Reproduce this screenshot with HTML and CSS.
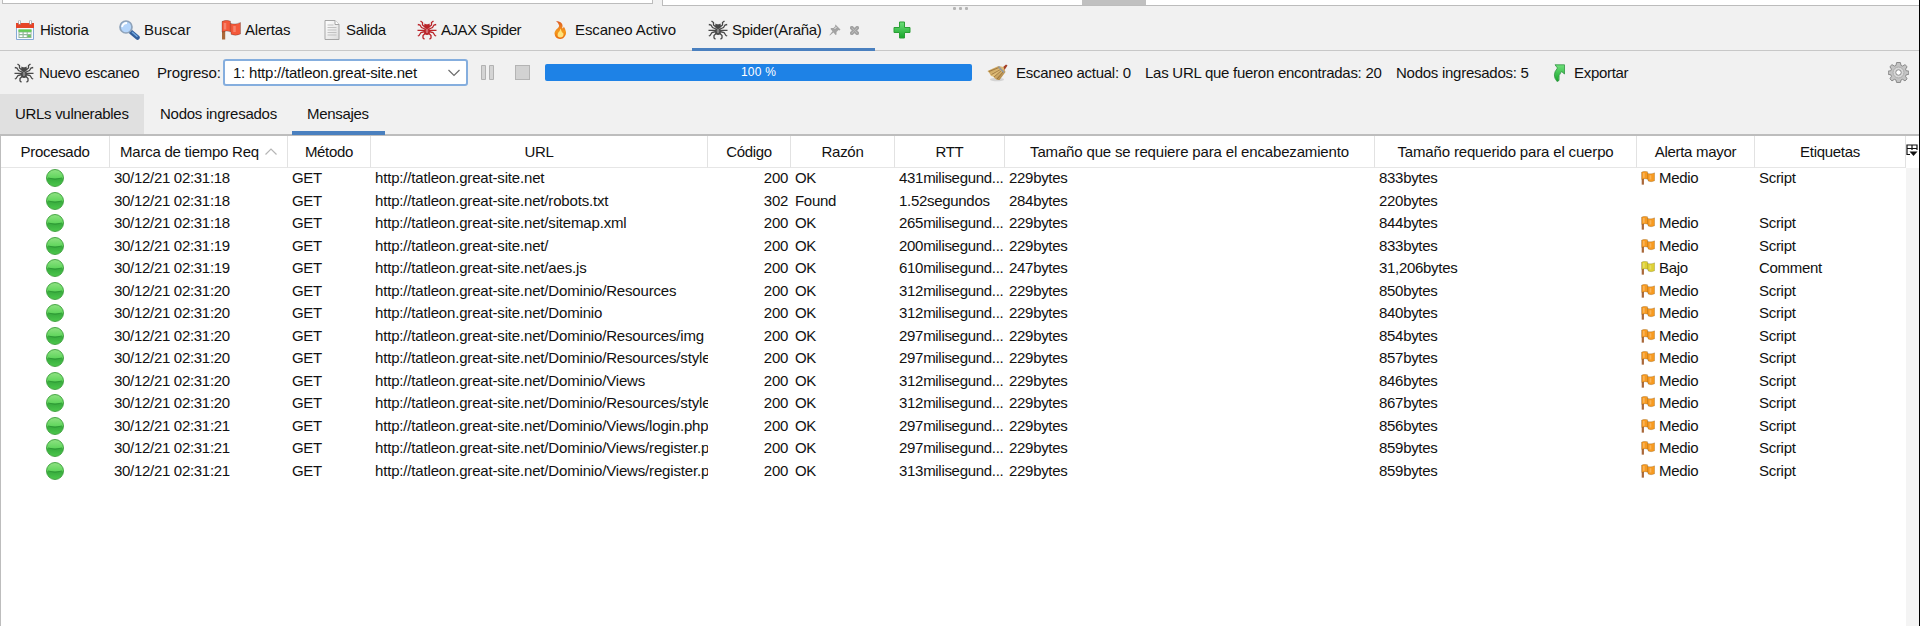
FILE: index.html
```html
<!DOCTYPE html>
<html lang="es">
<head>
<meta charset="utf-8">
<title>Spider(Araña)</title>
<link rel="stylesheet" href="styles.css">
</head>
<body>
<svg class="defs" width="0" height="0">
  <defs>
    <linearGradient id="ball" x1="0" y1="0" x2="0" y2="1"><stop offset="0" stop-color="#8fe283"/><stop offset=".48" stop-color="#62d65e"/><stop offset=".56" stop-color="#38ad3e"/><stop offset="1" stop-color="#4cc84c"/></linearGradient>
    <linearGradient id="red" x1="0" y1="0" x2="1" y2="1"><stop offset="0" stop-color="#ff9a78"/><stop offset=".5" stop-color="#f4593a"/><stop offset="1" stop-color="#d93a20"/></linearGradient>
    <linearGradient id="fire" x1="0" y1="0" x2="0" y2="1"><stop offset="0" stop-color="#dd5a22"/><stop offset=".6" stop-color="#f59a1c"/><stop offset="1" stop-color="#e8660c"/></linearGradient>
    <linearGradient id="grn" x1="0" y1="0" x2="0" y2="1"><stop offset="0" stop-color="#6ee07a"/><stop offset="1" stop-color="#17a52a"/></linearGradient>
    <linearGradient id="doc" x1="0" y1="0" x2="1" y2="1"><stop offset="0" stop-color="#fff"/><stop offset="1" stop-color="#dcdcdc"/></linearGradient>
    <linearGradient id="wood" x1="0" y1="0" x2="1" y2="1"><stop offset="0" stop-color="#b98d45"/><stop offset=".5" stop-color="#dfbd78"/><stop offset="1" stop-color="#96682a"/></linearGradient>
    <symbol id="spider" viewBox="0 0 20 20">
      <g fill="none" stroke="currentColor" stroke-width="1.300">
        <path d="M8.500 7.500 5.500 5V2.500L3.500 1M11.500 7.500l3-2.500V2.500L16.500 1M8 9 4.500 7.500 3 5 .8 4.500M12 9l3.500-1.500L17 5l2.200-.5M8 11.500 4 12.500 2 15.500.8 16M12 11.500l4 1 2 3 1.200.5M8.500 13 6 15.500v2.500L7.500 19.300M11.500 13l2.500 2.500v2.500l-1.500 1.300M8 10.300H.5M12 10.300H19.500"/>
      </g>
      <ellipse cx="10" cy="11.500" rx="2.900" ry="3.500" fill="currentColor"/><path d="M7.500 3.500 9 4.300h2l1.500-.8.5 3-1.500 2h-3L7 6.500z" fill="currentColor"/><ellipse cx="10" cy="11" rx="1.300" ry="2.200" fill="#fff" opacity=".35"/>
    </symbol>
    <symbol id="flag" viewBox="0 0 20 20">
      <path d="M1 1.500h3.200V19.500H1z" fill="#a9683a"/><path d="M1 1.500Q5-.8 9.500 1.200V3.500q5.500 1.500 10-1V14q-5 2.500-9.500.3V12Q6 10 1 12z" fill="currentColor" stroke="#0004" stroke-width=".8"/><path d="M4 3v6.500M13.500 6v6" stroke="#fff" stroke-width="2.500" opacity=".25"/><path d="M9.500 3v9" stroke="#000" stroke-width="1.500" opacity=".15"/>
    </symbol>
    <symbol id="led" viewBox="0 0 18 18"><circle cx="9" cy="9" r="8.500" fill="url(#ball)" stroke="#3d9e3c" stroke-width=".9"/><path d="M2 9q7 2.500 14 0" fill="none" stroke="#2b9633" stroke-width=".9"/></symbol>
  </defs>
</svg>
<div class="app">
  <div class="panes">
    <div class="pane pane-left"></div>
    <div class="pane pane-right"><div class="scroll-thumb"></div></div>
    <div class="grip"><i></i><i></i><i></i></div>
  </div>
  <nav class="tabs">
    <div class="tab t-hist"><svg class="ic" viewBox="0 0 20 20"><path d="M1.500 4h17v15.500h-17z" fill="#f7faff" stroke="#86a9d6"/><path d="M1 3h18v5H1z" fill="#e64427"/><path d="M4.500 .5v4M15.500 .5v4" stroke="#9aa5ae" stroke-width="2.500"/><path d="M4.500 1v3M15.500 1v3" stroke="#fff" stroke-width="1"/><path d="M3.500 9.500h13V18h-13z" fill="#93b79a"/><path d="M3.500 9.500h13v2.300h-13z" fill="#65cc55"/><path d="M4.500 12.500h3V14h-3zm4.200 0h3V14h-3zm4 0h3V14h-3zM4.500 15.300h3v1.700h-3zm4.200 0h3v1.700h-3z" fill="#fff"/><path d="M12.700 15.300h3v1.700h-3z" fill="#65cc55"/></svg><span>Historia</span></div>
    <div class="tab t-find"><svg class="ic ic-find" viewBox="0 0 22 20"><path d="m13 12 6.500 5.500" stroke="#335f9b" stroke-width="4.500" stroke-linecap="round"/><path d="m14 12 5.500 4.800" stroke="#72a8df" stroke-width="1.500"/><circle cx="8" cy="7" r="6" fill="#b4d5fb" stroke="#8fa3ba" stroke-width="1.700"/><path d="M4 7q1-4 5-4" fill="none" stroke="#fff" stroke-width="1.800"/></svg><span>Buscar</span></div>
    <div class="tab t-alert"><svg class="ic flag-red"><use href="#flag"/></svg><span>Alertas</span></div>
    <div class="tab t-out"><svg class="ic ic-doc" viewBox="0 0 16 20"><path d="M1 .5h10l4 4v15H1z" fill="url(#doc)" stroke="#a5a5a5"/><path d="M11 .5v4h4" fill="#fff" stroke="#a5a5a5"/><path d="M3.500 5h6M3.500 7.500h9M3.500 10h9M3.500 12.500h9M3.500 15h9" stroke="#c1c1c1"/></svg><span>Salida</span></div>
    <div class="tab t-ajax"><svg class="ic spider-red"><use href="#spider"/></svg><span>AJAX Spider</span></div>
    <div class="tab t-scan"><svg class="ic ic-fire" viewBox="0 0 12 18"><path d="M2 0q8.500 1 6 7.500Q10 7 9.800 5.500q3.500 5.500 1.500 9Q9.500 18 6 18 1 17.500.5 12.500q0-3 3.500-5.500Q7 4 2 0z" fill="url(#fire)"/><path d="M6.500 7.500q-.5 3-2.500 4.500-1.500 4 2 4.500 4 0 3.500-4Q7.500 11.500 6.500 7.500z" fill="#ffe27a"/></svg><span>Escaneo Activo</span></div>
    <div class="tab t-spider active"><svg class="ic spider-dark"><use href="#spider"/></svg><span>Spider(Araña)</span>
      <svg class="pin" viewBox="0 0 12 12"><path d="m6.500.5 5 5-1 1-1-.5-2 2v2.500L6.500 11 4.500 8.500.8 11.500.5 11l3-3.700L1.500 5l.5-1h2.500l2-2-.5-.8z" fill="#a3a3a3"/><path d="m5.500 5 2-2" stroke="#eee"/></svg>
      <svg class="close" viewBox="0 0 10 10"><path d="M1 0h2l2 2 2-2h2l1 1v2L8 5l2 2v2L9 10H7L5 8l-2 2H1L0 9V7l2-2-2-2V1z" fill="#a3a3a3"/><path d="m2 2 6 6M8 2 2 8" stroke="#bbb"/></svg></div>
    <div class="tab t-add"><svg class="ic ic-add" viewBox="0 0 18 18"><path d="M6.500 1h5v5.500H17v5h-5.500V17h-5v-5.500H1v-5h5.500z" fill="url(#grn)" stroke="#2b9e35"/></svg></div>
  </nav>
  <div class="toolbar">
    <button class="btn"><svg class="ic spider-dark"><use href="#spider"/></svg><span class="w-new">Nuevo escaneo</span></button>
    <span class="progress-label">Progreso:</span>
    <div class="combo"><span>1: http://tatleon.great-site.net</span><svg viewBox="0 0 12 8"><path d="m.5 1 5.500 5.500L11.500 1" fill="none" stroke="#6c6c6c" stroke-width="1.200"/></svg></div>
    <svg class="pause" viewBox="0 0 13 15"><path d="M.5.5h4v14h-4zM8.500.5h4v14h-4z" fill="#d4d4d4" stroke="#b2b2b2"/></svg>
    <div class="stop"></div>
    <div class="bar">100 %</div>
    <svg class="broom" viewBox="0 0 21 18"><ellipse cx="10" cy="15.500" rx="7" ry="1.800" fill="#d4d4d4"/><path d="m15 4 4-3.500 1.500 1-3 4.500z" fill="#a33e25"/><path d="m.5 7 11-5 5 1 2 5-6 8q-3 .5-5-2Q6 12 4 12 3 9 .5 7z" fill="url(#wood)"/><path d="m2 7.500 10-4M4.500 10.500l9-5M7 13l7.500-6.500M10 15l6-7" stroke="#80592a" stroke-width=".6"/><path d="m11.500 2.500 5.500 6" stroke="#9299a2" stroke-width="1.500"/></svg>
    <span class="stat s1">Escaneo actual: 0</span><span class="stat s2">Las URL que fueron encontradas: 20</span><span class="stat s3">Nodos ingresados: 5</span>
    <button class="btn export"><svg class="ic-export" viewBox="0 0 12 18"><path d="M2 .8h9.500V10L8.500 7.500Q5 11 6 16.500L4 17.500Q-1.500 11 4.500 4z" fill="url(#grn)" stroke="#319443" stroke-width=".8"/></svg><span>Exportar</span></button>
    <svg class="gear" viewBox="0 0 20 20"><g fill="#c4c4c4" stroke="#858585" stroke-width=".9"><path d="M8.200.5h3.600l.6 2.800 1.500.6L16.200 2.500l2 2-1.500 2.300.6 1.500 2.500.4v3l-2.500.5-.6 1.500 1.500 2.300-2 2-2.300-1.500-1.500.6-.6 2.400H8.200l-.6-2.400-1.500-.6-2.300 1.500-2-2 1.500-2.300-.6-1.500-2.500-.5v-3l2.500-.4.6-1.500-1.500-2.300 2-2 2.300 1.400 1.500-.6z"/><circle cx="10" cy="10" r="5.200" fill="#d7d7d7" stroke="#aaa"/><circle cx="10" cy="10" r="2.600" fill="#fff"/></g></svg>
  </div>
  <nav class="subtabs"><div class="sub hover">URLs vulnerables</div><div class="sub nodes">Nodos ingresados</div><div class="sub selected">Mensajes</div></nav>
  <div class="grid">
    <div class="head"><div>Procesado</div><div class="sorted"><span>Marca de tiempo Req</span><svg viewBox="0 0 12 7"><path d="m.5 6.500 5.500-5.500 5.500 5.500" fill="none" stroke="#b5b5b5" stroke-width="1.200"/></svg></div><div>Método</div><div>URL</div><div>Código</div><div>Razón</div><div>RTT</div><div class="wide">Tamaño que se requiere para el encabezamiento</div><div class="wide">Tamaño requerido para el cuerpo</div><div>Alerta mayor</div><div>Etiquetas</div><div class="colctl"><svg viewBox="0 0 12 12"><path d="M4 10.500H1V1h10v5M1 4.500h10M6 1v5" fill="none" stroke="#111" stroke-width="1.200"/><path d="M3.500 7.500h8L7.500 12z" fill="#111"/></svg></div></div>
    <div class="rows" id="rows"></div>
  </div>
</div>
<script src="rows.js"></script>
</body>
</html>
```
FILE: styles.css
```css
* { box-sizing: border-box; }
body { margin: 0; background: #f1f1f1; color: #111; font: 15px/20px "Liberation Sans", Arial, sans-serif; letter-spacing: -.3px; overflow: hidden; }
.defs { position: absolute; }
svg { display: block; flex: none; }
span { white-space: nowrap; }
.app { width: 1920px; height: 626px; display: flex; flex-direction: column; border-right: 1px solid #000; }
.panes { position: relative; height: 6px; flex: none; display: flex; align-items: flex-start; padding-left: 2px; gap: 9px; }
.pane { background: #fff; border: 1px solid #bcbcbc; border-top: 0; }
.pane-left { width: 651px; height: 4px; }
.pane-right { flex: 1; height: 6px; padding-left: 419px; border-right: 0; }
.scroll-thumb { width: 64px; height: 5px; background: #c0c0c0; }
.grip { position: absolute; left: 953px; top: 7px; display: flex; gap: 3px; }
.grip i { width: 3px; height: 3px; border-radius: 1px; background: #b4b4b4; }
.tabs { height: 45px; flex: none; display: flex; border-bottom: 1px solid #c8c8c8; }
.tab { height: 45px; display: flex; align-items: center; padding-bottom: 0; padding-top: 3px; }
.ic { width: 20px; height: 20px; }
.t-hist { width: 117px; padding-left: 15px; gap: 5px; }
.t-find { width: 104px; padding-left: 1px; gap: 4px; letter-spacing: 0; }
.ic-find { width: 22px; }
.t-alert { width: 102px; gap: 4px; letter-spacing: -.2px; }
.flag-red { color: #f4593a; }
.t-out { width: 94px; padding-left: 1px; gap: 6px; }
.ic-doc { width: 16px; }
.t-ajax { width: 137px; gap: 4px; letter-spacing: -.45px; }
.spider-red { color: #b92328; }
.spider-dark { color: #484848; }
.t-scan { width: 138px; gap: 9px; letter-spacing: -.12px; }
.ic-fire { width: 12px; height: 18px; }
.t-spider { width: 183px; padding-left: 16px; gap: 4px; }
.active { border-bottom: 3px solid #4a80bf; padding-top: 6px; }
.pin { width: 12px; height: 12px; margin-left: 4px; }
.close { width: 9px; height: 9px; margin-left: 5px; }
.t-add { padding-left: 18px; }
.ic-add { width: 18px; height: 18px; }
.toolbar { height: 43px; flex: none; display: flex; align-items: center; padding-left: 14px; }
.btn { display: flex; align-items: center; gap: 5px; padding: 0; border: 0; background: none; color: inherit; font: inherit; letter-spacing: inherit; }
.w-new { width: 118px; text-align: left; }
.progress-label { width: 66px; letter-spacing: -.15px; }
.combo { width: 245px; height: 27px; display: flex; align-items: center; justify-content: space-between; padding: 0 6px 0 8px; background: #fff; border: 2px solid #85aede; border-radius: 3px; letter-spacing: -.22px; }
.combo svg { width: 12px; height: 8px; }
.pause { width: 13px; height: 15px; margin-left: 13px; }
.stop { width: 15px; height: 15px; margin-left: 21px; background: #d2d2d2; border: 1px solid #b4b4b4; }
.bar { width: 427px; height: 17px; margin-left: 15px; background: #1e82e6; border-radius: 2px; color: #fff; font-size: 12px; line-height: 17px; text-align: center; letter-spacing: .2px; }
.broom { width: 21px; height: 18px; margin-left: 15px; }
.stat { flex: none; letter-spacing: -.26px; }
.s1 { width: 129px; margin-left: 8px; }
.s2 { width: 251px; }
.s3 { width: 157px; }
.export { gap: 9px; }
.ic-export { width: 12px; height: 18px; }
.gear { width: 21px; height: 21px; margin-left: auto; margin-right: 10px; }
.subtabs { height: 42px; flex: none; display: flex; border-bottom: 2px solid #bdbdbd; }
.sub { height: 41px; line-height: 40px; padding-left: 15px; white-space: nowrap; }
.hover { width: 144px; background: #e0e0e0; height: 40px; }
.nodes { width: 148px; padding-left: 16px; letter-spacing: -.25px; }
.selected { width: 93px; border-bottom: 4px solid #4a80bf; }
.grid { flex: 1; background: linear-gradient(#f4f4f4, #f4f4f4) 1905px 32px / 14px 500px no-repeat #fff; border-left: 1px solid #bdbdbd; }
.head, .row { display: grid; grid-template-columns: 109px 178px 83px 337px 83px 104px 110px 370px 262px 118px 151px 13px; }
.head { height: 31px; line-height: 31px; text-align: center; }
.head > div { border-right: 1px solid #e2e2e2; border-bottom: 1px solid #e6e6e6; white-space: nowrap; }
.head .wide { letter-spacing: -.16px; }
.head .sorted { display: flex; align-items: center; justify-content: center; gap: 6px; letter-spacing: -.24px; }
.sorted svg { width: 12px; height: 7px; }
.head .colctl { border: 0; display: flex; align-items: center; }
.colctl svg { width: 12px; height: 12px; margin-top: -4px; }
.row { height: 22.5px; line-height: 22.5px; }
.row > div { padding-left: 4px; overflow: hidden; white-space: nowrap; }
.row .led { padding: 2px 0 0 45px; }
.led svg { width: 18px; height: 18px; }
.row .url { letter-spacing: -.17px; }
.row .code { text-align: right; padding-right: 3px; }
.row .alert { display: flex; align-items: center; gap: 4px; }
.alert svg { width: 14px; height: 14px; }
.medio { color: #f79a20; }
.bajo { color: #ded033; }
```
FILE: rows.js
```js
const site = 'http://tatleon.great-site.net';
const rows = [
  ['18', '', 200, 'OK', '431milisegund...', 229, '833', 'Medio', 'Script'],
  ['18', '/robots.txt', 302, 'Found', '1.52segundos', 284, '220', '', ''],
  ['18', '/sitemap.xml', 200, 'OK', '265milisegund...', 229, '844', 'Medio', 'Script'],
  ['19', '/', 200, 'OK', '200milisegund...', 229, '833', 'Medio', 'Script'],
  ['19', '/aes.js', 200, 'OK', '610milisegund...', 247, '31,206', 'Bajo', 'Comment'],
  ['20', '/Dominio/Resources', 200, 'OK', '312milisegund...', 229, '850', 'Medio', 'Script'],
  ['20', '/Dominio', 200, 'OK', '312milisegund...', 229, '840', 'Medio', 'Script'],
  ['20', '/Dominio/Resources/img', 200, 'OK', '297milisegund...', 229, '854', 'Medio', 'Script'],
  ['20', '/Dominio/Resources/style', 200, 'OK', '297milisegund...', 229, '857', 'Medio', 'Script'],
  ['20', '/Dominio/Views', 200, 'OK', '312milisegund...', 229, '846', 'Medio', 'Script'],
  ['20', '/Dominio/Resources/style', 200, 'OK', '312milisegund...', 229, '867', 'Medio', 'Script'],
  ['21', '/Dominio/Views/login.php.', 200, 'OK', '297milisegund...', 229, '856', 'Medio', 'Script'],
  ['21', '/Dominio/Views/register.p', 200, 'OK', '297milisegund...', 229, '859', 'Medio', 'Script'],
  ['21', '/Dominio/Views/register.p', 200, 'OK', '313milisegund...', 229, '859', 'Medio', 'Script']
];
document.getElementById('rows').innerHTML = rows.map(([s, path, code, reason, rtt, head, body, level, tag]) =>
  `<div class="row"><div class="led"><svg><use href="#led"/></svg></div><div class="time">30/12/21 02:31:${s}</div><div>GET</div><div class="url">${site}${path}</div><div class="code">${code}</div><div>${reason}</div><div class="rtt">${rtt}</div><div>${head}bytes</div><div>${body}bytes</div><div class="alert">${level ? `<svg class="${level.toLowerCase()}"><use href="#flag"/></svg><span>${level}</span>` : ''}</div><div>${tag}</div></div>`
).join('');
```
